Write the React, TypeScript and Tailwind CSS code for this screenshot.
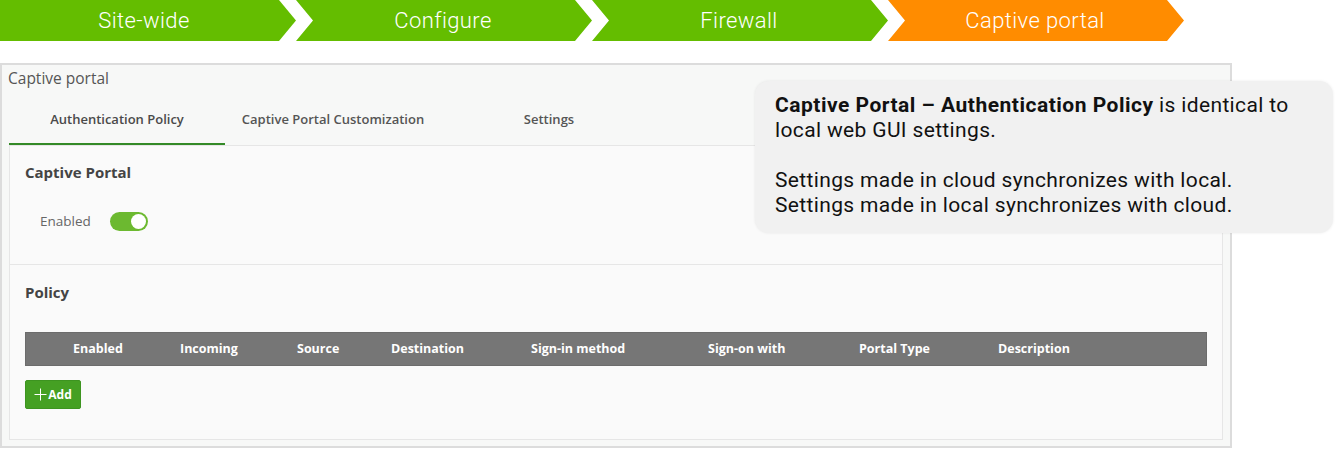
import React from "react";

const steps = [
  { label: "Site-wide", color: "bg-[#64bd00]", first: true },
  { label: "Configure", color: "bg-[#64bd00]" },
  { label: "Firewall", color: "bg-[#64bd00]" },
  { label: "Captive portal", color: "bg-[#ff8c00]" },
];

const columns = [
  { label: "Enabled", w: "w-[154px] pl-[47px]" },
  { label: "Incoming", w: "w-[117px]" },
  { label: "Source", w: "w-[94px]" },
  { label: "Destination", w: "w-[140px]" },
  { label: "Sign-in method", w: "w-[177px]" },
  { label: "Sign-on with", w: "w-[151px]" },
  { label: "Portal Type", w: "w-[139px]" },
  { label: "Description", w: "flex-1" },
];

const tabs = ["Authentication Policy", "Captive Portal Customization", "Settings"];

function Breadcrumb() {
  return (
    <div className="flex h-[41px] font-['Roboto',sans-serif]">
      {steps.map((s) => (
        <div
          key={s.label}
          className={`${s.color} w-[296px] h-full flex items-center text-white text-[22px] font-light tracking-[0.4px]`}
          style={{
            clipPath: s.first
              ? "polygon(0 0, 279px 0, 296px 50%, 279px 100%, 0 100%)"
              : "polygon(0 0, 279px 0, 296px 50%, 279px 100%, 0 100%, 17px 50%)",
          }}
        >
          <span className={`${s.first ? "w-[288px]" : "w-[294px]"} text-center`}>{s.label}</span>
        </div>
      ))}
    </div>
  );
}

function Toggle() {
  return (
    <div className="w-[38px] h-[19px] rounded-full bg-[#6cb930] flex items-center justify-end pr-[2px]">
      <div className="w-[15px] h-[15px] rounded-full bg-white" />
    </div>
  );
}

export default function App() {
  return (
    <div className="relative w-[1335px] h-[450px] bg-white overflow-hidden font-['Open_Sans',sans-serif]">
      <Breadcrumb />

      <div className="mt-[22px] w-[1232px] border-2 border-[#dcdcdc] bg-[#f7f8f7] px-[7px] pb-[6px]">
        <div className="pt-[3px] -ml-[1px] h-[23px] text-[15.5px] leading-[20px] text-[#555]">Captive portal</div>

        <div className="flex">
          {tabs.map((t, i) => (
            <div
              key={t}
              className={`w-[216px] h-[57px] pt-[8px] flex items-center justify-center text-[13px] font-semibold ${
                i === 0 ? "border-b-2 border-[#348a27] text-[#4a4a4a]" : "border-b-2 border-transparent text-[#555]"
              }`}
            >
              {t}
            </div>
          ))}
        </div>

        <div className="border border-[#e6e6e6] bg-[#fafafa]">
          <div className="pt-[16px] pb-[33px] pl-[15px]">
            <div className="text-[15px] leading-[20px] font-bold text-[#444]">Captive Portal</div>
            <div className="mt-[29px] flex items-center gap-[19px] pl-[15px]">
              <span className="text-[13.5px] text-[#666]">Enabled</span>
              <Toggle />
            </div>
          </div>

          <div className="border-t border-[#e6e6e6] pt-[17px] pb-[30px] px-[15px]">
            <div className="text-[15px] leading-[20px] font-bold text-[#444]">Policy</div>
            <div className="mt-[30px] h-[34px] w-[1182px] bg-[#767676] border border-[#6c6c6c] flex items-center text-white text-[12.5px] font-bold">
              {columns.map((c) => (
                <div key={c.label} className={c.w}>
                  {c.label}
                </div>
              ))}
            </div>
            <button className="mt-[14px] h-[29px] w-[56px] rounded-[2px] bg-[#45a023] border border-[#3d9420] flex items-center justify-center gap-[1px] text-white text-[12px] font-bold">
              <svg width="13" height="13" viewBox="0 0 13 13" fill="none" stroke="white" strokeWidth="1">
                <path d="M6.5 0.5v12M0.5 6.5h12" />
              </svg>
              Add
            </button>
          </div>
        </div>
      </div>

      <div className="absolute left-[755px] top-[81px] w-[578px] h-[152px] rounded-[14px] bg-[#f1f1f1] shadow-[0_0_3px_rgba(0,0,0,0.08)] pt-[12px] pl-[20px] font-['Roboto',sans-serif] text-[21px] leading-[25px] tracking-[0.35px] text-[#111]">
        <p>
          <span className="font-bold tracking-[0.5px]">Captive Portal – Authentication Policy</span> is identical to
        </p>
        <p>local web GUI settings.</p>
        <p className="mt-[25px]">Settings made in cloud synchronizes with local.</p>
        <p>Settings made in local synchronizes with cloud.</p>
      </div>
    </div>
  );
}
